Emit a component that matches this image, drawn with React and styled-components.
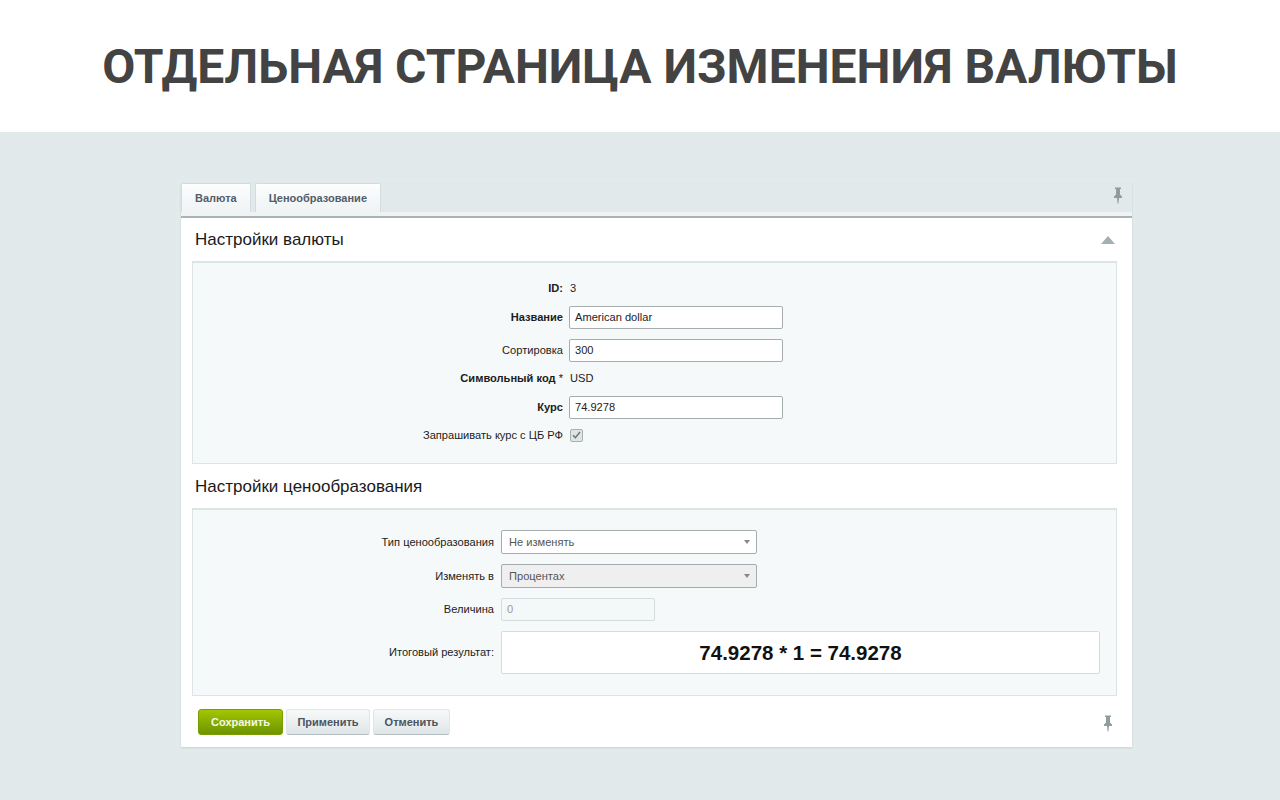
import React from "react";
import styled, { createGlobalStyle } from "styled-components";

const GlobalStyle = createGlobalStyle`
    html, body {
        margin: 0;
        padding: 0;
        background: #e1e9ea;
    }
    body {
        font-family: "Liberation Sans", Arial, sans-serif;
    }
`;

function Pin() {
    return (
        <svg width="10" height="17" viewBox="0 0 10 17">
            <path d="M2 0.5h6v1.5h-1v5.5l2 2v1.5h-3l-0.6 5.5h-0.8l-0.6-5.5h-3v-1.5l2-2v-5.5h-1z" fill="#909c9e" />
        </svg>
    );
}

function Arrow() {
    return (
        <svg width="14" height="8" viewBox="0 0 14 8">
            <path d="M7 0l7 8h-14z" fill="#a3afb2" />
        </svg>
    );
}

function Check() {
    return (
        <svg width="9" height="8" viewBox="0 0 9 8">
            <path d="M1 4.2l2.4 2.4 4.6-5.6" fill="none" stroke="#6a7375" strokeWidth="1.4" />
        </svg>
    );
}

export default function App() {
    return (
        <Page>
            <GlobalStyle />
            <Hero>
                <Title>ОТДЕЛЬНАЯ СТРАНИЦА ИЗМЕНЕНИЯ ВАЛЮТЫ</Title>
            </Hero>
            <Content>
                <Panel>
                    <TabBar>
                        <Tab>Валюта</Tab>
                        <Tab>Ценообразование</Tab>
                        <TabPin>
                            <Pin />
                        </TabPin>
                    </TabBar>
                    <Strip />
                    <Card>
                        <SectionHead>
                            <SectionTitle>Настройки валюты</SectionTitle>
                            <Arrow />
                        </SectionHead>
                        <FormBox $height={203} $top={16}>
                            <Row $col={370} $height={20}>
                                <Label $bold>ID:</Label>
                                <Value>3</Value>
                            </Row>
                            <Row $col={370} $height={23} $mt={8}>
                                <Label $bold>Название</Label>
                                <TextInput $width={214}>American dollar</TextInput>
                            </Row>
                            <Row $col={370} $height={23} $mt={10}>
                                <Label>Сортировка</Label>
                                <TextInput $width={214}>300</TextInput>
                            </Row>
                            <Row $col={370} $height={20} $mt={6}>
                                <Label $bold>
                                    Символьный код <Star>*</Star>
                                </Label>
                                <Value>USD</Value>
                            </Row>
                            <Row $col={370} $height={23} $mt={8}>
                                <Label $bold>Курс</Label>
                                <TextInput $width={214}>74.9278</TextInput>
                            </Row>
                            <Row $col={370} $height={20} $mt={6}>
                                <Label>Запрашивать курс с ЦБ РФ</Label>
                                <CheckBox>
                                    <Check />
                                </CheckBox>
                            </Row>
                        </FormBox>
                        <SectionHead $second>
                            <SectionTitle>Настройки ценообразования</SectionTitle>
                        </SectionHead>
                        <FormBox $height={188} $top={21}>
                            <Row $col={301} $gap={7} $height={24}>
                                <Label>Тип ценообразования</Label>
                                <Select>
                                    Не изменять
                                    <SelectArrow />
                                </Select>
                            </Row>
                            <Row $col={301} $gap={7} $height={24} $mt={10}>
                                <Label>Изменять в</Label>
                                <Select $disabled>
                                    Процентах
                                    <SelectArrow />
                                </Select>
                            </Row>
                            <Row $col={301} $gap={7} $height={23} $mt={10}>
                                <Label>Величина</Label>
                                <TextInput $width={154} $disabled>0</TextInput>
                            </Row>
                            <Row $col={301} $gap={7} $height={43} $mt={10}>
                                <Label>Итоговый результат:</Label>
                                <Result>74.9278 * 1 = 74.9278</Result>
                            </Row>
                        </FormBox>
                        <Footer>
                            <Buttons>
                                <GreenButton>Сохранить</GreenButton>
                                <GreyButton>Применить</GreyButton>
                                <GreyButton>Отменить</GreyButton>
                            </Buttons>
                            <FooterPin>
                                <Pin />
                            </FooterPin>
                        </Footer>
                    </Card>
                </Panel>
            </Content>
        </Page>
    );
}

const Page = styled.div`
    width: 1280px;
    height: 800px;
    overflow: hidden;
    display: flex;
    flex-direction: column;
`;
const Hero = styled.header`
    height: 132px;
    background: #fff;
    display: flex;
    align-items: center;
    justify-content: center;
`;
const Title = styled.h1`
    margin: 0;
    font-family: Roboto, "Liberation Sans", sans-serif;
    font-size: 48px;
    font-weight: 700;
    color: #434343;
    white-space: nowrap;
`;
const Content = styled.main`
    flex: 1;
    padding: 51px 148px 0 181px;
`;
const Panel = styled.section`
    width: 951px;
    box-shadow: 0 1px 2px rgba(120, 140, 145, 0.25), 0 0 0 5px rgba(255, 255, 255, 0.05);
`;
const TabBar = styled.div`
    height: 29px;
    display: flex;
    gap: 4px;
    padding-right: 9px;
`;
const Tab = styled.div`
    padding: 0 13px;
    height: 29px;
    box-sizing: border-box;
    display: flex;
    align-items: center;
    background: linear-gradient(#fdfefe, #eff3f4);
    border: 1px solid #d3dcde;
    border-bottom: 0;
    border-radius: 2px 2px 0 0;
    font-size: 11px;
    font-weight: 700;
    color: #535c69;
`;
const TabPin = styled.div`
    margin-left: auto;
    padding-top: 4px;
`;
const Strip = styled.div`
    height: 4px;
    background: #eff3f4;
    border-bottom: 2px solid #a9b3b5;
`;
const Card = styled.div`
    height: 529px;
    box-sizing: border-box;
    background: #fff;
    padding: 0 15px 0 11px;
`;
const SectionHead = styled.div`
    height: ${({ $second }) => ($second ? "44px" : "43px")};
    box-sizing: border-box;
    display: flex;
    align-items: center;
    justify-content: space-between;
    padding: ${({ $second }) => ($second ? "2px 2px 0 3px" : "1px 2px 0 3px")};
`;
const SectionTitle = styled.h2`
    margin: 0;
    font-size: 17px;
    font-weight: 400;
    color: #1a1a1a;
`;
const FormBox = styled.div`
    height: ${({ $height }) => $height}px;
    box-sizing: border-box;
    background: #f5f9f9;
    border: 1px solid #dce4e6;
    border-top: 2px solid #dde4e6;
    padding-top: ${({ $top }) => $top - 1}px;
    display: flex;
    flex-direction: column;
`;
const Row = styled.div`
    height: ${({ $height }) => $height}px;
    margin-top: ${({ $mt }) => $mt || 0}px;
    display: grid;
    grid-template-columns: ${({ $col }) => $col}px 1fr;
    column-gap: ${({ $gap }) => $gap || 6}px;
    align-items: center;
    padding-right: 16px;
`;
const Label = styled.div`
    text-align: right;
    padding-bottom: 1px;
    font-size: 11.1px;
    font-weight: ${({ $bold }) => ($bold ? 700 : 400)};
    color: #1c1c1c;
`;
const Star = styled.span`
    font-weight: 400;
`;
const Value = styled.div`
    padding: 0 0 1px 1px;
    font-size: 11.1px;
    color: #222;
`;
const TextInput = styled.div`
    width: ${({ $width }) => $width}px;
    height: 23px;
    box-sizing: border-box;
    padding: 0 5px 1px;
    display: flex;
    align-items: center;
    background: ${({ $disabled }) => ($disabled ? "#f4f8f8" : "#fff")};
    border: 1px solid ${({ $disabled }) => ($disabled ? "#d5dcde" : "#a5adaf")};
    border-radius: 2px;
    font-size: 11.1px;
    color: ${({ $disabled }) => ($disabled ? "#9a9a9a" : "#222")};
`;
const CheckBox = styled.div`
    width: 13px;
    height: 13px;
    margin-left: 1px;
    box-sizing: border-box;
    display: flex;
    align-items: center;
    justify-content: center;
    background: #dfe4e5;
    border: 1px solid #a8b0b2;
    border-radius: 2px;
`;
const Select = styled.div`
    width: 256px;
    height: 24px;
    box-sizing: border-box;
    padding: 0 7px;
    display: flex;
    align-items: center;
    justify-content: space-between;
    background: ${({ $disabled }) => ($disabled ? "#efefef" : "#fff")};
    border: 1px solid #a5adaf;
    border-radius: 2px;
    font-size: 11.1px;
    color: #555;
`;
const SelectArrow = styled.span`
    width: 0;
    height: 0;
    border-left: 3.5px solid transparent;
    border-right: 3.5px solid transparent;
    border-top: 4px solid #888;
    margin-right: -1px;
`;
const Result = styled.div`
    height: 43px;
    box-sizing: border-box;
    display: flex;
    align-items: center;
    justify-content: center;
    background: #fff;
    border: 1px solid #d5dcde;
    border-radius: 2px;
    font-size: 20.5px;
    font-weight: 700;
    color: #111;
`;
const Footer = styled.div`
    padding: 13px 4px 0 6px;
    display: flex;
    align-items: flex-start;
    justify-content: space-between;
`;
const FooterPin = styled.div`
    padding-top: 6px;
`;
const Buttons = styled.div`
    display: flex;
    gap: 3px;
`;
const GreyButton = styled.div`
    height: 26px;
    box-sizing: border-box;
    padding: 0 10.5px;
    display: flex;
    align-items: center;
    background: linear-gradient(#f7f9f9, #dfe6e8);
    border: 1px solid #e0e6e8;
    border-bottom-color: #b5bec1;
    border-radius: 3px;
    font-size: 11px;
    font-weight: 700;
    color: #4b5560;
`;
const GreenButton = styled(GreyButton)`
    padding: 0 12px;
    background: linear-gradient(#a3c600, #6d9400);
    border: 1px solid #7a9e00;
    color: #f4f8e8;
`;
